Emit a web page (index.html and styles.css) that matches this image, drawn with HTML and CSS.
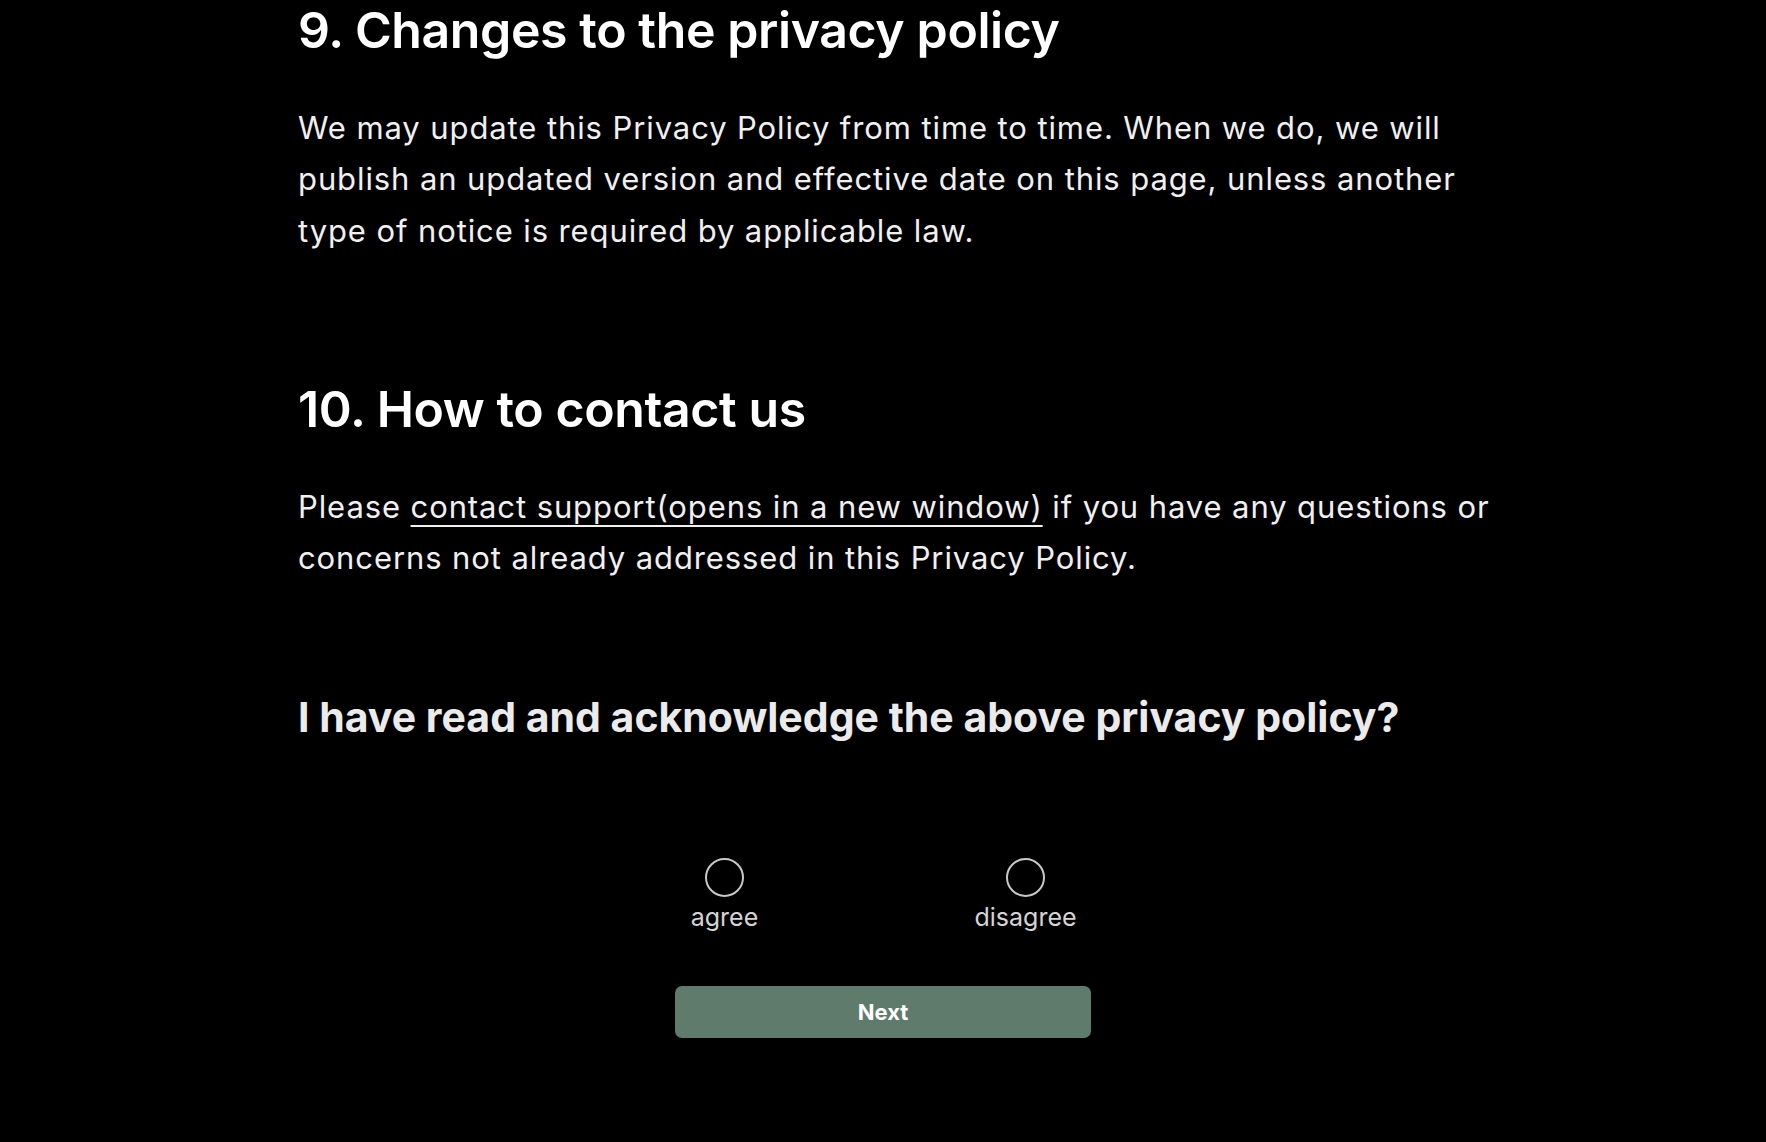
FILE: index.html
```html
<!DOCTYPE html>
<html lang="en">
<head>
<meta charset="utf-8">
<title>Privacy policy</title>
<link rel="stylesheet" href="styles.css">
</head>
<body>
<main class="page">
  <section class="section">
    <h2 class="heading">9. Changes to the privacy policy</h2>
    <p class="text">We may update this Privacy Policy from time to time. When we do, we will publish an updated version and effective date on this page, unless another type of notice is required by applicable law.</p>
  </section>
  <section class="section section-contact">
    <h2 class="heading">10. How to contact us</h2>
    <p class="text">Please <a class="link" href="#">contact support(opens in a new window)</a> if you have any questions or concerns not already addressed in this Privacy Policy.</p>
  </section>
  <form class="ack">
    <h3 class="question">I have read and acknowledge the above privacy policy?</h3>
    <div class="choices">
      <label class="choice"><input type="radio" name="ack" class="radio"><span class="choice-label">agree</span></label>
      <label class="choice"><input type="radio" name="ack" class="radio"><span class="choice-label">disagree</span></label>
    </div>
    <div class="actions">
      <button type="button" class="next">Next</button>
    </div>
  </form>
</main>
</body>
</html>
```
FILE: styles.css
```css
html, body {
  margin: 0;
  padding: 0;
  background: #000;
}
body {
  font-family: Inter, "Noto Sans", sans-serif;
  color: #f0f0f0;
}
.page {
  width: 1205px;
  margin-left: 298px;
}
.heading {
  margin: 0;
  font-size: 50px;
  font-weight: 600;
  line-height: 60px;
  letter-spacing: -0.4px;
  color: #fff;
}
.text {
  margin: 42px 0 0;
  font-size: 31px;
  line-height: 51.25px;
  letter-spacing: 0.9px;
  font-weight: 400;
}
.section-contact {
  margin-top: 123px;
}
.link {
  color: inherit;
  text-decoration: underline;
  text-underline-offset: 7px;
  text-decoration-thickness: 2px;
}
.ack {
  margin-top: 109px;
}
.question {
  margin: 0;
  font-size: 41px;
  font-weight: 700;
  line-height: 50px;
  color: #ebebeb;
}
.choices {
  display: flex;
  justify-content: center;
  gap: 221px;
  margin-top: 116px;
  margin-left: -298px;
  width: 1750px;
}
.choice {
  display: flex;
  flex-direction: column;
  align-items: center;
  gap: 5px;
  width: 80px;
}
.radio {
  appearance: none;
  -webkit-appearance: none;
  margin: 0;
  width: 39px;
  height: 39px;
  border: 2.5px solid #c8c8c8;
  border-radius: 50%;
  background: transparent;
}
.choice-label {
  font-size: 25px;
  color: #d4d4d4;
}
.actions {
  display: flex;
  justify-content: center;
  margin-left: -298px;
  width: 1766px;
  margin-top: 54px;
}
.next {
  width: 416px;
  height: 52px;
  background: #5e7b6c;
  border: none;
  border-radius: 7px;
  color: #fff;
  font-family: Inter, sans-serif;
  font-size: 22px;
  font-weight: 700;
}
```
